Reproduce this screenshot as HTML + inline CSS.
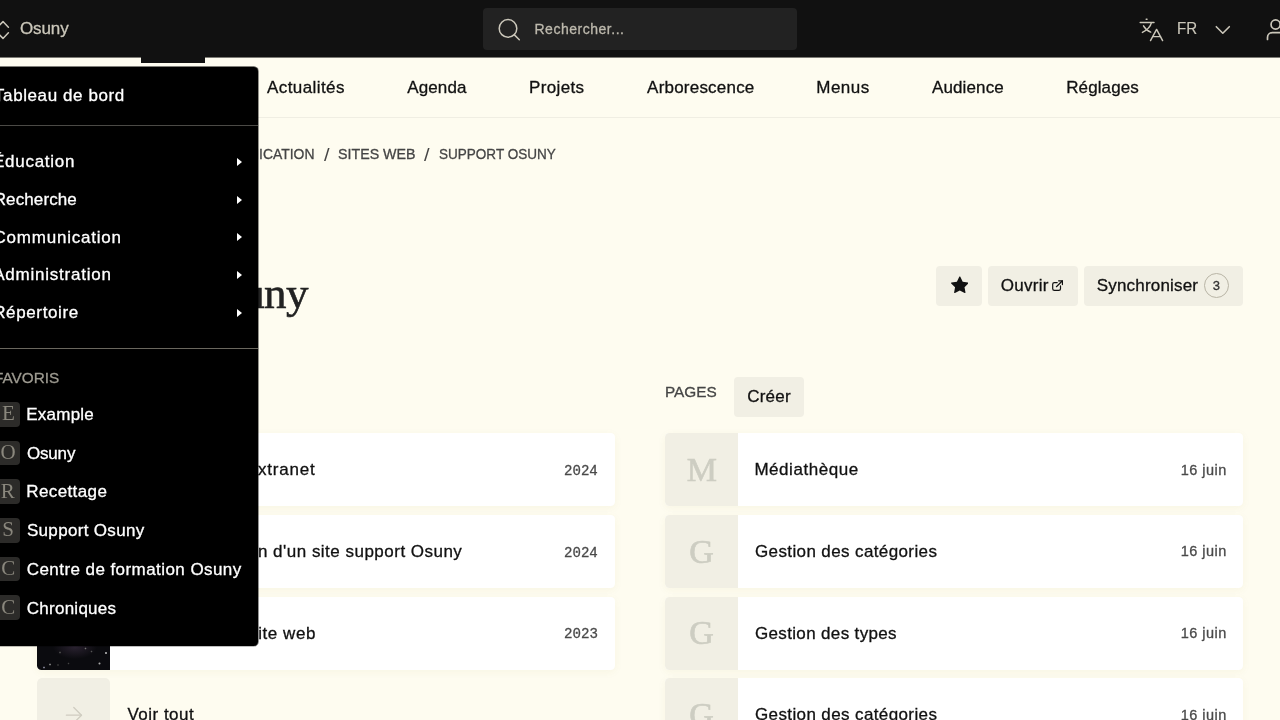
<!DOCTYPE html>
<html lang="fr">
<head>
<meta charset="utf-8">
<title>Support Osuny</title>
<style>
*{box-sizing:border-box;margin:0;padding:0}
html,body{width:1280px;height:720px;overflow:hidden;background:#fefcf0}
body{position:relative;font-family:'Liberation Sans',sans-serif;color:#111}
#app{position:absolute;left:0;top:0;width:1280px;height:720px;will-change:transform}
svg,.t{position:absolute}
.t{display:block;white-space:nowrap;line-height:1;transform-origin:0 50%;font-weight:normal;font-style:normal;text-decoration:none;color:#111;-webkit-text-stroke:.3px currentColor}
.f-sans{font-family:'Liberation Sans',sans-serif}
.f-serif{font-family:'Liberation Serif',serif}
.f-mono{font-family:'Liberation Mono',monospace}

/* top bar */
header.top{position:absolute;left:0;top:0;width:1280px;height:57px;background:#111;overflow:hidden;box-shadow:0 1px 0 rgba(17,17,17,.55)}
.searchbox{position:absolute;left:483px;top:8px;width:314px;height:42px;background:#222;border-radius:4px}

/* section tabs */
nav.tabs{position:absolute;left:0;top:58px;width:1280px;height:60px;border-bottom:1px solid #f0eee3}
nav.tabs .indicator{position:absolute;left:141px;top:-1px;width:63.5px;height:5.7px;background:#111}

/* page */
main{position:absolute;left:0;top:0;width:1280px;height:720px}
.btn{position:absolute;display:block;height:40px;background:#f1efe4;border-radius:4px}
.badge{position:absolute;left:119.6px;top:7.3px;width:25px;height:25px;border:1px solid #b9b5a6;border-radius:50%}
.card{position:absolute;display:block;height:73px;background:#fff;border-radius:4.5px;box-shadow:0 2px 8px rgba(150,130,40,.06);overflow:hidden}
.card .thumb{position:absolute;left:0;top:0;width:72.5px;height:100%;background:#f1efe4}
.card.plain{background:transparent;box-shadow:none}
.card.plain .thumb{border-radius:5px}
.thumb.night{background-color:#0b0b0f;background-image:
 radial-gradient(circle at 69px 56px,#ddd 0,#bbb .5px,transparent 1.4px),
 radial-gradient(circle at 62.5px 66.5px,#aaa 0,#888 .6px,transparent 1.5px),
 radial-gradient(circle at 13px 67.5px,#999 0,#777 .5px,transparent 1.3px),
 radial-gradient(circle at 7px 70.5px,#9ab 0,#778 .5px,transparent 1.3px),
 radial-gradient(circle at 48.5px 51.5px,#777 0,#555 .5px,transparent 1.3px),
 radial-gradient(circle at 23px 55.5px,#555 0,#444 .5px,transparent 1.3px),
 radial-gradient(circle at 54.5px 54.5px,#555 0,#444 .5px,transparent 1.2px),
 radial-gradient(circle at 21px 68px,#444 0,#333 .5px,transparent 1.2px),
 radial-gradient(circle at 31.5px 66.5px,#444 0,#333 .5px,transparent 1.2px),
 radial-gradient(ellipse 22px 12px at 38px 50px,#2a2230 0,transparent 100%)}

/* organisation dropdown */
.dropdown{position:absolute;left:0;top:66.7px;width:258.4px;height:579.6px;background:#000;border-radius:0 4.5px 4.5px 0;overflow:hidden;box-shadow:0 -1px 0 rgba(0,0,0,.5),1px 0 0 rgba(0,0,0,.42),0 1px 0 rgba(0,0,0,.25)}
.dropdown .sep{position:absolute;left:0;width:100%;height:1px;border:0}
.dropdown .tri{position:absolute;left:237px;width:0;height:0;border-left:5.8px solid #fff;border-top:4.8px solid transparent;border-bottom:4.8px solid transparent}
.dropdown .lb{position:absolute;left:-3.8px;width:24px;height:24.8px;border-radius:4px;background:#2c2b29}
</style>
</head>
<body>
<div id="app">

<header class="top">
  <a class="brand">
    <svg style="left:-8px;top:18px" width="20" height="24" viewBox="-8 18 20 24" fill="none" stroke="#cbc7ba" stroke-width="1.5" stroke-linecap="round" stroke-linejoin="round"><path d="M-2.6 27.2 L3 21.6 L8.4 27.2"/><path d="M-2.6 32.8 L3 38.4 L8.4 32.8"/></svg>
    <span class="t f-sans brand-name" style="font-size:17px;color:#cbc7ba;left:19.92px;top:19.61px;letter-spacing:-0.076px;">Osuny</span>
  </a>
  <form class="searchbox" role="search">
    <svg style="left:12px;top:8px" width="28" height="28" viewBox="495 16 28 28" fill="none" stroke="#cbc7ba" stroke-width="1.5" stroke-linecap="round"><circle cx="508" cy="28.4" r="8.8"/><path d="M514.4 34.9 L519.3 39.7"/></svg>
    <span class="t f-sans placeholder" style="font-size:14px;color:#bdb9ad;left:51.48px;top:14.35px;letter-spacing:0.520px;">Rechercher...</span>
  </form>
  <div class="lang">
    <svg style="left:1136px;top:14px" width="30" height="30" viewBox="1136 14 30 30" fill="none" stroke="#cbc7ba" stroke-width="1.45" stroke-linecap="round" stroke-linejoin="round">
      <path d="M1140.2 22.5 H1154"/><path d="M1146.2 19.3 H1147"/>
      <path d="M1151.4 22.7 C1150.6 26.5 1146.8 30.2 1142.4 32.4"/><path d="M1143.5 25.8 C1145 28.5 1147.6 30.8 1150.7 32.1"/>
      <path d="M1150.5 40.6 L1156.6 29.4 L1162.6 40.6"/><path d="M1152.7 36.6 H1160.5"/>
    </svg>
    <span class="t f-sans" style="font-size:16.5px;color:#cbc7ba;left:1176.79px;top:20.03px;transform:scaleX(0.9160);-webkit-text-stroke:.15px currentColor;">FR</span>
    <svg style="left:1212px;top:22px" width="22" height="16" viewBox="1212 22 22 16" fill="none" stroke="#cbc7ba" stroke-width="1.6" stroke-linecap="round" stroke-linejoin="round"><path d="M1216.3 26.7 L1222.8 33.2 L1229.3 26.7"/></svg>
  </div>
  <a class="user">
    <svg style="left:1264px;top:16px" width="16" height="28" viewBox="1264 16 16 28" fill="none" stroke="#cbc7ba" stroke-width="1.7" stroke-linecap="round" stroke-linejoin="round"><circle cx="1275.6" cy="24.5" r="4.55"/><path d="M1267.5 39.4 V37.4 C1267.5 34.6 1269.6 32.7 1272.2 32.7 H1282"/></svg>
  </a>
</header>

<nav class="tabs">
  <span class="indicator"></span>
  <a class="t f-sans" style="font-size:17px;left:36.32px;top:20.71px;letter-spacing:0.3px;">Site</a><a class="t f-sans active" style="font-size:17px;left:140.65px;top:20.71px;letter-spacing:0.1px;">Contenu</a><a class="t f-sans" style="font-size:17px;left:267.00px;top:20.71px;letter-spacing:0.412px;">Actualités</a><a class="t f-sans" style="font-size:17px;left:407.20px;top:20.71px;letter-spacing:0.145px;">Agenda</a><a class="t f-sans" style="font-size:17px;left:529.04px;top:20.71px;letter-spacing:0.360px;">Projets</a><a class="t f-sans" style="font-size:17px;left:647.10px;top:20.71px;letter-spacing:0.211px;">Arborescence</a><a class="t f-sans" style="font-size:17px;left:816.24px;top:20.71px;letter-spacing:0.486px;">Menus</a><a class="t f-sans" style="font-size:17px;left:931.90px;top:20.71px;letter-spacing:0.147px;">Audience</a><a class="t f-sans" style="font-size:17px;left:1066.24px;top:20.71px;letter-spacing:0.106px;">Réglages</a>
</nav>

<main>
  <nav class="breadcrumb"><a class="t f-sans" style="font-size:14.5px;color:#454545;left:195.30px;top:146.73px;transform:scaleX(0.9588);">COMMUNICATION</a><span class="t f-sans" style="font-size:18.5px;color:#454545;left:323.60px;top:145.54px;transform:scaleX(1.0811);-webkit-text-stroke:0;">/</span><a class="t f-sans" style="font-size:14.5px;color:#454545;left:338.18px;top:146.73px;transform:scaleX(0.9814);">SITES WEB</a><span class="t f-sans" style="font-size:18.5px;color:#454545;left:424.40px;top:145.54px;transform:scaleX(1.0811);-webkit-text-stroke:0;">/</span><span class="t f-sans" style="font-size:14.5px;color:#454545;left:438.71px;top:146.73px;transform:scaleX(0.9330);">SUPPORT OSUNY</span></nav>
  <h1 class="t f-serif" style="font-size:45px;color:#222;left:44.43px;top:271.01px;letter-spacing:-0.6px;-webkit-text-stroke:.55px currentColor;">Support Osuny</h1>
  <div class="actions">
    <a class="btn" style="left:936px;top:265.5px;width:46.1px">
      <svg style="left:14.5px;top:10.7px" width="17.6" height="17.6" viewBox="0 0 16 16" fill="#111"><path d="M3.612 15.443c-.386.198-.824-.149-.746-.592l.83-4.73L.173 6.765c-.329-.314-.158-.888.283-.95l4.898-.696L7.538.792c.197-.39.73-.39.927 0l2.184 4.327 4.898.696c.441.062.612.636.282.95l-3.522 3.356.83 4.73c.078.443-.36.79-.746.592L8 13.187l-4.389 2.256z"/></svg>
    </a>
    <a class="btn" style="left:987.6px;top:265.5px;width:90.6px">
      <span class="t f-sans" style="font-size:17px;left:13.22px;top:11.41px;letter-spacing:0.285px;">Ouvrir</span>
      <svg style="left:62.4px;top:12.5px" width="16" height="16" viewBox="1050 278 16 16" fill="none" stroke="#111" stroke-width="1.2" stroke-linecap="round" stroke-linejoin="round"><path d="M1057.2 282.6 H1054.4 C1053.4 282.6 1052.7 283.3 1052.7 284.3 V288.7 C1052.7 289.7 1053.4 290.4 1054.4 290.4 H1058.8 C1059.8 290.4 1060.5 289.7 1060.5 288.7 V285.9"/><path d="M1056.4 286.7 L1062.4 280.8"/><path d="M1058.6 280.8 H1062.4 V284.6"/></svg>
    </a>
    <a class="btn" style="left:1084px;top:265.5px;width:158.8px">
      <span class="badge"></span>
      <span class="t f-sans" style="font-size:17px;left:12.72px;top:11.41px;letter-spacing:0.190px;">Synchroniser</span><span class="t f-sans count" style="font-size:13px;color:#333;left:128.81px;top:13.30px;">3</span>
    </a>
  </div>

  <section class="col-left">
    <h2 class="t f-sans" style="font-size:15.5px;color:#454545;left:37.42px;top:384.18px;transform:scaleX(0.8684);">PROJETS</h2>
    <a class="btn" style="left:105.8px;top:376.7px;width:70.4px"><span class="t f-sans" style="font-size:17px;left:13.35px;top:11.41px;letter-spacing:0.266px;">Créer</span></a>
    <a class="card" style="left:37.3px;top:433.3px;width:577.6px"><span class="thumb"></span><span class="t f-sans title" style="font-size:17px;left:84.67px;top:27.91px;letter-spacing:0.760px;">Développer un extranet</span><span class="t f-mono meta" style="font-size:14.5px;color:#4a4a4a;left:527.11px;top:30.59px;transform:scaleX(0.9708);">2024</span></a>
    <a class="card" style="left:37.3px;top:515px;width:577.6px"><span class="thumb"></span><span class="t f-sans title" style="font-size:17px;left:97.15px;top:27.91px;letter-spacing:0.486px;">Personnalisation d'un site support Osuny</span><span class="t f-mono meta" style="font-size:14.5px;color:#4a4a4a;left:527.11px;top:30.59px;transform:scaleX(0.9708);">2024</span></a>
    <a class="card" style="left:37.3px;top:596.7px;width:577.6px"><span class="thumb night"></span><span class="t f-sans title" style="font-size:17px;left:88.66px;top:27.91px;letter-spacing:0.562px;">Développer un site web</span><span class="t f-mono meta" style="font-size:14.5px;color:#4a4a4a;left:527.11px;top:30.59px;transform:scaleX(0.9751);">2023</span></a>
    <a class="card plain" style="left:37.3px;top:678.3px;width:577.6px"><span class="thumb"></span>
      <svg style="left:24.7px;top:25.7px" width="24" height="16" viewBox="62 704 24 16" fill="none" stroke="#cfccc0" stroke-width="1.3" stroke-linecap="round" stroke-linejoin="round"><path d="M66.4 715.2 H81.4"/><path d="M73.8 707.5 L81.5 715.2 L73.8 722.9"/></svg>
      <span class="t f-sans title" style="font-size:17px;left:90.20px;top:27.91px;letter-spacing:0.480px;">Voir tout</span></a>
  </section>

  <section class="col-right">
    <h2 class="t f-sans" style="font-size:15.5px;color:#454545;left:665.27px;top:384.18px;transform:scaleX(0.9912);">PAGES</h2>
    <a class="btn" style="left:733.8px;top:376.7px;width:70.4px"><span class="t f-sans" style="font-size:17px;left:13.35px;top:11.41px;letter-spacing:0.266px;">Créer</span></a>
    <a class="card" style="left:665.3px;top:433.3px;width:577.4px"><span class="thumb"></span><span class="t f-serif initial" style="font-size:34px;color:#cdcdc2;left:21.52px;top:19.72px;-webkit-text-stroke:.6px currentColor;">M</span><span class="t f-sans title" style="font-size:17px;left:89.14px;top:27.91px;letter-spacing:0.538px;">Médiathèque</span><span class="t f-sans meta" style="font-size:14.5px;color:#4a4a4a;left:515.48px;top:29.43px;letter-spacing:0.450px;">16 juin</span></a>
    <a class="card" style="left:665.3px;top:515px;width:577.4px"><span class="thumb"></span><span class="t f-serif initial" style="font-size:34px;color:#cdcdc2;left:23.94px;top:19.73px;-webkit-text-stroke:.6px currentColor;">G</span><span class="t f-sans title" style="font-size:17px;left:89.65px;top:27.91px;letter-spacing:0.385px;">Gestion des catégories</span><span class="t f-sans meta" style="font-size:14.5px;color:#4a4a4a;left:515.48px;top:29.43px;letter-spacing:0.450px;">16 juin</span></a>
    <a class="card" style="left:665.3px;top:596.7px;width:577.4px"><span class="thumb"></span><span class="t f-serif initial" style="font-size:34px;color:#cdcdc2;left:23.94px;top:19.73px;-webkit-text-stroke:.6px currentColor;">G</span><span class="t f-sans title" style="font-size:17px;left:89.65px;top:27.91px;letter-spacing:0.349px;">Gestion des types</span><span class="t f-sans meta" style="font-size:14.5px;color:#4a4a4a;left:515.48px;top:29.43px;letter-spacing:0.450px;">16 juin</span></a>
    <a class="card" style="left:665.3px;top:678.3px;width:577.4px"><span class="thumb"></span><span class="t f-serif initial" style="font-size:34px;color:#cdcdc2;left:23.94px;top:19.73px;-webkit-text-stroke:.6px currentColor;">G</span><span class="t f-sans title" style="font-size:17px;left:89.65px;top:27.91px;letter-spacing:0.385px;">Gestion des catégories</span><span class="t f-sans meta" style="font-size:14.5px;color:#4a4a4a;left:515.48px;top:29.43px;letter-spacing:0.450px;">16 juin</span></a>
  </section>
</main>

<aside class="dropdown">
  <a class="t f-sans" style="font-size:17px;color:#fff;left:-6.03px;top:20.61px;letter-spacing:0.596px;">Tableau de bord</a>
  <hr class="sep" style="top:58.4px;background:#4b4a46">
  <a class="t f-sans" style="font-size:17px;color:#fff;left:-7.00px;top:86.51px;letter-spacing:0.730px;">Éducation</a><span class="tri" style="top:91.3px"></span>
  <a class="t f-sans" style="font-size:17px;color:#fff;left:-6.32px;top:124.11px;letter-spacing:0.116px;">Recherche</a><span class="tri" style="top:129.0px"></span>
  <a class="t f-sans" style="font-size:17px;color:#fff;left:-6.48px;top:162.31px;letter-spacing:0.778px;">Communication</a><span class="tri" style="top:166.7px"></span>
  <a class="t f-sans" style="font-size:17px;color:#fff;left:-6.79px;top:199.51px;letter-spacing:0.772px;">Administration</a><span class="tri" style="top:204.4px"></span>
  <a class="t f-sans" style="font-size:17px;color:#fff;left:-6.84px;top:237.21px;letter-spacing:0.631px;">Répertoire</a><span class="tri" style="top:242.1px"></span>
  <hr class="sep" style="top:281.4px;background:#6a675e">
  <h3 class="t f-sans" style="font-size:15.4px;color:#9d9a90;left:-5.61px;top:303.16px;transform:scaleX(0.9950);">FAVORIS</h3>
  <span class="lb" style="top:335.30px"><span class="t f-serif" style="font-size:21px;color:#8a877d;left:5.71px;top:1.41px;-webkit-text-stroke:0;">E</span></span><a class="t f-sans" style="font-size:17px;color:#fff;left:26.24px;top:338.91px;letter-spacing:0.239px;">Example</a>
  <span class="lb" style="top:373.96px"><span class="t f-serif" style="font-size:21px;color:#8a877d;left:4.23px;top:1.75px;-webkit-text-stroke:0;">O</span></span><a class="t f-sans" style="font-size:17px;color:#fff;left:26.92px;top:377.91px;letter-spacing:-0.163px;">Osuny</a>
  <span class="lb" style="top:412.62px"><span class="t f-serif" style="font-size:21px;color:#8a877d;left:4.65px;top:1.49px;-webkit-text-stroke:0;">R</span></span><a class="t f-sans" style="font-size:17px;color:#fff;left:26.24px;top:416.31px;letter-spacing:0.391px;">Recettage</a>
  <span class="lb" style="top:451.28px"><span class="t f-serif" style="font-size:21px;color:#8a877d;left:6.02px;top:1.53px;-webkit-text-stroke:0;">S</span></span><a class="t f-sans" style="font-size:17px;color:#fff;left:26.92px;top:455.01px;letter-spacing:0.328px;">Support Osuny</a>
  <span class="lb" style="top:489.94px"><span class="t f-serif" style="font-size:21px;color:#8a877d;left:4.97px;top:1.77px;-webkit-text-stroke:0;">C</span></span><a class="t f-sans" style="font-size:17px;color:#fff;left:26.75px;top:493.91px;letter-spacing:0.433px;">Centre de formation Osuny</a>
  <span class="lb" style="top:528.60px"><span class="t f-serif" style="font-size:21px;color:#8a877d;left:4.97px;top:2.11px;-webkit-text-stroke:0;">C</span></span><a class="t f-sans" style="font-size:17px;color:#fff;left:26.75px;top:532.91px;letter-spacing:0.258px;">Chroniques</a>
</aside>

</div>
</body>
</html>
